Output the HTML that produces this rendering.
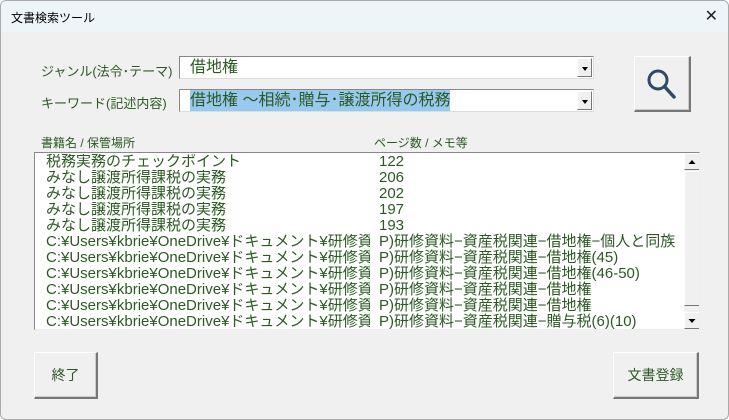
<!DOCTYPE html>
<html><head><meta charset="utf-8"><style>
*{margin:0;padding:0;box-sizing:border-box}
body{width:729px;height:420px;background:#fff;font-family:"Liberation Sans","Noto Sans CJK JP",sans-serif;position:relative;overflow:hidden}
.win{position:absolute;left:0;top:0;width:729px;height:420px;background:#f0f0f0;border:1px solid #aaa;border-radius:6px;overflow:hidden}
.title{position:absolute;left:0;top:0;width:729px;height:31px;background:#eef5f8;font-size:12px;color:#000;padding:8px 0 0 10px}
.x{position:absolute;right:12px;top:5px;font-size:16px;color:#222}
.g{color:#2a5a22;position:absolute;white-space:nowrap}
.lbl{font-size:13px}
.combo{position:absolute;left:178px;width:415px;height:23px;background:#fff;border:1px solid #888;border-right-color:#ddd;border-bottom-color:#ddd;font-size:16px}
.combo .t{position:absolute;left:10px;top:0;color:#2a5a22;line-height:21px}
.dd{position:absolute;right:1px;top:1px;width:15px;height:19px;background:#f0f0f0;border:1px solid #fff;border-right-color:#777;border-bottom-color:#777}
.dd:after{content:"";position:absolute;left:4px;top:8px;border-left:3px solid transparent;border-right:3px solid transparent;border-top:4px solid #000}
.btn{position:absolute;background:#f0f0f0;border:1px solid #fff;border-right:2px solid #777;border-bottom:2px solid #777;box-shadow:inset -1px -1px 0 #ccc;font-size:14px;color:#2a5a22;display:flex;align-items:center;justify-content:center}
.list{position:absolute;left:33px;top:151px;width:666px;height:178px;background:#fff;border:1px solid #888;border-right-color:#eee;border-bottom-color:#eee;overflow:hidden}
.row{position:absolute;left:11px;height:16px;font-size:15px;line-height:16px;color:#2a5a22;white-space:nowrap;width:640px}
.c1{position:absolute;left:0;top:0;width:324px;overflow:hidden}
.c2{position:absolute;left:333px;top:0}
.sb{position:absolute;left:649px;top:0;width:16px;height:176px;background:#f0f0f0}
.sbb{position:absolute;left:0;width:16px;height:17px;background:#f0f0f0;border:1px solid #fff;border-right-color:#777;border-bottom-color:#777}
.thumb{position:absolute;left:0;top:18px;width:16px;height:135px;background:#f0f0f0;border:1px solid #fff;border-right-color:#777;border-bottom-color:#777}
</style></head><body>
<div class="win">
<div class="title">文書検索ツール<span class="x">✕</span></div>
<div class="g lbl" style="left:40px;top:60px">ジャンル(法令･テーマ)</div>
<div class="g lbl" style="left:40px;top:92px">キーワード(記述内容)</div>
<div class="combo" style="top:55px"><span class="t">借地権</span><div class="dd"></div></div>
<div class="combo" style="top:88px"><span class="t" style="background:#99c9ef">借地権 ～相続･贈与･譲渡所得の税務</span><div class="dd"></div></div>
<div class="btn" style="left:633px;top:55px;width:57px;height:56px">
<svg width="34" height="34" viewBox="0 0 34 34"><circle cx="13" cy="13" r="9" fill="none" stroke="#2e4a66" stroke-width="3"/><line x1="19.5" y1="19.5" x2="29" y2="30" stroke="#2e4a66" stroke-width="3.5" stroke-linecap="round"/></svg></div>
<div class="g" style="left:40px;top:133px;font-size:12px">書籍名 / 保管場所</div>
<div class="g" style="left:373px;top:133px;font-size:12px">ページ数 / メモ等</div>
<div class="list">
<div class="row" style="top:1px"><span class="c1">税務実務のチェックポイント</span><span class="c2">122</span></div>
<div class="row" style="top:17px"><span class="c1">みなし譲渡所得課税の実務</span><span class="c2">206</span></div>
<div class="row" style="top:33px"><span class="c1">みなし譲渡所得課税の実務</span><span class="c2">202</span></div>
<div class="row" style="top:49px"><span class="c1">みなし譲渡所得課税の実務</span><span class="c2">197</span></div>
<div class="row" style="top:65px"><span class="c1">みなし譲渡所得課税の実務</span><span class="c2">193</span></div>
<div class="row" style="top:81px"><span class="c1">C:¥Users¥kbrie¥OneDrive¥ドキュメント¥研修資料¥</span><span class="c2">P)研修資料−資産税関連−借地権−個人と同族</span></div>
<div class="row" style="top:97px"><span class="c1">C:¥Users¥kbrie¥OneDrive¥ドキュメント¥研修資料¥</span><span class="c2">P)研修資料−資産税関連−借地権(45)</span></div>
<div class="row" style="top:113px"><span class="c1">C:¥Users¥kbrie¥OneDrive¥ドキュメント¥研修資料¥</span><span class="c2">P)研修資料−資産税関連−借地権(46-50)</span></div>
<div class="row" style="top:129px"><span class="c1">C:¥Users¥kbrie¥OneDrive¥ドキュメント¥研修資料¥</span><span class="c2">P)研修資料−資産税関連−借地権</span></div>
<div class="row" style="top:145px"><span class="c1">C:¥Users¥kbrie¥OneDrive¥ドキュメント¥研修資料¥</span><span class="c2">P)研修資料−資産税関連−借地権</span></div>
<div class="row" style="top:161px"><span class="c1">C:¥Users¥kbrie¥OneDrive¥ドキュメント¥研修資料¥</span><span class="c2">P)研修資料−資産税関連−贈与税(6)(10)</span></div>
<div class="sb">
<div class="sbb" style="top:0"><svg width="14" height="15"><path d="M3.5 10 L7 6 L10.5 10Z" fill="#000"/></svg></div>
<div class="thumb"></div>
<div class="sbb" style="top:159px"><svg width="14" height="15"><path d="M3.5 6 L7 10 L10.5 6Z" fill="#000"/></svg></div>
</div>
</div>
<div class="btn" style="left:33px;top:351px;width:64px;height:47px">終了</div>
<div class="btn" style="left:612px;top:351px;width:86px;height:47px">文書登録</div>
</div>
</body></html>
